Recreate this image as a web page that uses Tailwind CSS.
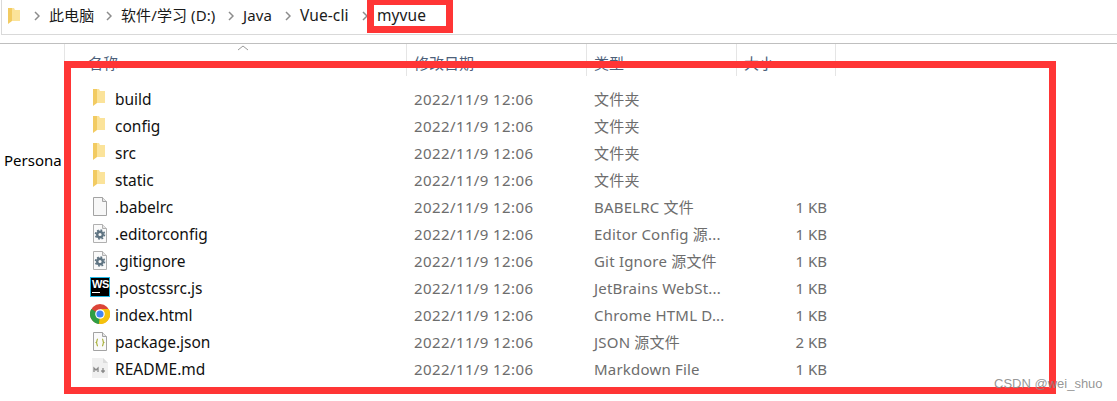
<!DOCTYPE html>
<html lang="zh">
<head>
<meta charset="utf-8">
<title>myvue</title>
<script src="https://cdn.jsdelivr.net/npm/@tailwindcss/browser@4"></script>
</head>
<body class="bg-white">
<div id="window" class="relative w-[1117px] h-[401px] overflow-hidden bg-white text-[15px] font-['Noto_Sans','Noto_Sans_CJK_SC',sans-serif]">

  <!-- Address bar -->
  <div class="h-[35px] ml-px pb-[3px] border-l border-b border-[#d9d9d9] flex items-center text-[#1a1a1a] tracking-[0.1px]">
    <svg class="ml-[6px] mr-[14px]" width="12" height="16" viewBox="0 0 12 16"><path d="M0 0h6l1 2h5v11H0z" fill="#fbe39a"/><path d="M0 0h4v13l-4 3z" fill="#f2cb62"/></svg>
    <div class="flex items-center w-[72px]"><svg class="mr-[9px]" width="6" height="10" viewBox="0 0 6 10"><path d="M1 1l4 4-4 4" fill="none" stroke="#8c8c8c" stroke-width="1.5"/></svg>此电脑</div>
    <div class="flex items-center w-[122px]"><svg class="mr-[9px]" width="6" height="10" viewBox="0 0 6 10"><path d="M1 1l4 4-4 4" fill="none" stroke="#8c8c8c" stroke-width="1.5"/></svg>软件/学习 (D:)</div>
    <div class="flex items-center w-[57px]"><svg class="mr-[9px]" width="6" height="10" viewBox="0 0 6 10"><path d="M1 1l4 4-4 4" fill="none" stroke="#8c8c8c" stroke-width="1.5"/></svg>Java</div>
    <div class="flex items-center w-[77px]"><svg class="mr-[9px]" width="6" height="10" viewBox="0 0 6 10"><path d="M1 1l4 4-4 4" fill="none" stroke="#8c8c8c" stroke-width="1.5"/></svg><span class="text-[15.5px]">Vue-cli</span></div>
    <div class="flex items-center"><svg class="mr-[9px]" width="6" height="10" viewBox="0 0 6 10"><path d="M1 1l4 4-4 4" fill="none" stroke="#8c8c8c" stroke-width="1.5"/></svg><span class="text-[15.5px]">myvue</span></div>
  </div>

  <!-- Gap above the list -->
  <div class="h-[9px] border-b border-[#bfbfbf]"></div>

  <div class="flex">
    <!-- Navigation pane -->
    <div class="w-[64px] shrink-0 overflow-hidden pt-[105px] pl-[4px] text-black whitespace-nowrap">Persona</div>

    <div class="flex-1 relative">
      <!-- Column headers -->
      <div class="flex h-[32px] text-[#4c607a] text-[15px] leading-[38px] overflow-hidden">
        <div class="w-[342px] pl-[23px] border-l border-[#e5e5e5] relative">名称
          <svg class="absolute left-[172px] top-0" width="12" height="7" viewBox="0 0 12 7"><path d="M1 6l5-4 5 4" fill="none" stroke="#9a9a9a"/></svg>
        </div>
        <div class="w-[180px] pl-[7px] border-l border-[#e5e5e5]">修改日期</div>
        <div class="w-[150px] pl-[7px] border-l border-[#e5e5e5]">类型</div>
        <div class="w-[100px] pl-[7px] border-x border-[#e5e5e5]">大小</div>
      </div>

      <!-- File rows -->
      <div class="pt-[9px] flex flex-col text-[#6d6d6d]">
        <div class="flex h-[27px] items-center pt-[2px]"><div class="w-[25px] ml-[26px] mb-[3px] shrink-0"><svg width="16" height="18" viewBox="0 0 16 18"><path d="M3 0h6l1 2h5v12H3z" fill="#fbe39a"/><path d="M3 0h4v14l-4 3z" fill="#f2cb62"/></svg></div><div class="w-[291px] text-[15.5px] text-[#111]">build</div><div class="w-[180px] pl-[8px] tracking-[0.4px]">2022/11/9 12:06</div><div class="w-[150px] pl-[8px] tracking-[0.2px]">文件夹</div><div class="w-[91px]"></div></div>
        <div class="flex h-[27px] items-center pt-[2px]"><div class="w-[25px] ml-[26px] mb-[3px] shrink-0"><svg width="16" height="18" viewBox="0 0 16 18"><path d="M3 0h6l1 2h5v12H3z" fill="#fbe39a"/><path d="M3 0h4v14l-4 3z" fill="#f2cb62"/></svg></div><div class="w-[291px] text-[15.5px] text-[#111]">config</div><div class="w-[180px] pl-[8px] tracking-[0.4px]">2022/11/9 12:06</div><div class="w-[150px] pl-[8px] tracking-[0.2px]">文件夹</div><div class="w-[91px]"></div></div>
        <div class="flex h-[27px] items-center pt-[2px]"><div class="w-[25px] ml-[26px] mb-[3px] shrink-0"><svg width="16" height="18" viewBox="0 0 16 18"><path d="M3 0h6l1 2h5v12H3z" fill="#fbe39a"/><path d="M3 0h4v14l-4 3z" fill="#f2cb62"/></svg></div><div class="w-[291px] text-[15.5px] text-[#111]">src</div><div class="w-[180px] pl-[8px] tracking-[0.4px]">2022/11/9 12:06</div><div class="w-[150px] pl-[8px] tracking-[0.2px]">文件夹</div><div class="w-[91px]"></div></div>
        <div class="flex h-[27px] items-center pt-[2px]"><div class="w-[25px] ml-[26px] mb-[3px] shrink-0"><svg width="16" height="18" viewBox="0 0 16 18"><path d="M3 0h6l1 2h5v12H3z" fill="#fbe39a"/><path d="M3 0h4v14l-4 3z" fill="#f2cb62"/></svg></div><div class="w-[291px] text-[15.5px] text-[#111]">static</div><div class="w-[180px] pl-[8px] tracking-[0.4px]">2022/11/9 12:06</div><div class="w-[150px] pl-[8px] tracking-[0.2px]">文件夹</div><div class="w-[91px]"></div></div>

        <div class="flex h-[27px] items-center pt-[2px]"><div class="w-[25px] ml-[26px] mb-[3px] shrink-0"><svg width="18" height="19" viewBox="0 0 18 19"><path d="M3.500.5h9l4 4v14h-13z" fill="#f7f7f7" stroke="#a3a3a3"/><path d="M12.500.5v4h4" fill="#e5e5e5" stroke="#a3a3a3"/></svg></div><div class="w-[291px] text-[15.5px] text-[#111]">.babelrc</div><div class="w-[180px] pl-[8px] tracking-[0.4px]">2022/11/9 12:06</div><div class="w-[150px] pl-[8px] tracking-[0.2px]">BABELRC 文件</div><div class="w-[91px] text-right">1 KB</div></div>

        <div class="flex h-[27px] items-center pt-[2px]"><div class="w-[25px] ml-[26px] mb-[3px] shrink-0"><svg width="18" height="19" viewBox="0 0 18 19"><path d="M3.500.5h9l4 4v14h-13z" fill="#fafafa" stroke="#b0b0b0"/><path d="M12.500.5v4h4" fill="#e5e5e5" stroke="#b0b0b0"/><circle cx="10" cy="10.500" r="2.800" fill="none" stroke="#5f7482" stroke-width="2.400"/><circle cx="10" cy="10.500" r="4.500" fill="none" stroke="#5f7482" stroke-width="1.600" stroke-dasharray="1.800 1.730"/></svg></div><div class="w-[291px] text-[15.5px] text-[#111]">.editorconfig</div><div class="w-[180px] pl-[8px] tracking-[0.4px]">2022/11/9 12:06</div><div class="w-[150px] pl-[8px] tracking-[0.2px]">Editor Config 源...</div><div class="w-[91px] text-right">1 KB</div></div>
        <div class="flex h-[27px] items-center pt-[2px]"><div class="w-[25px] ml-[26px] mb-[3px] shrink-0"><svg width="18" height="19" viewBox="0 0 18 19"><path d="M3.500.5h9l4 4v14h-13z" fill="#fafafa" stroke="#b0b0b0"/><path d="M12.500.5v4h4" fill="#e5e5e5" stroke="#b0b0b0"/><circle cx="10" cy="10.500" r="2.800" fill="none" stroke="#5f7482" stroke-width="2.400"/><circle cx="10" cy="10.500" r="4.500" fill="none" stroke="#5f7482" stroke-width="1.600" stroke-dasharray="1.800 1.730"/></svg></div><div class="w-[291px] text-[15.5px] text-[#111]">.gitignore</div><div class="w-[180px] pl-[8px] tracking-[0.4px]">2022/11/9 12:06</div><div class="w-[150px] pl-[8px] tracking-[0.2px]">Git Ignore 源文件</div><div class="w-[91px] text-right">1 KB</div></div>

        <div class="flex h-[27px] items-center pt-[2px]"><div class="w-[25px] ml-[26px] mb-[3px] shrink-0"><div class="w-[20px] h-[20px] bg-black border border-[#21b8e6] text-white text-[11px] leading-[11px] font-bold font-['Liberation_Sans',sans-serif] pl-[1px] pt-[1px] tracking-[-0.5px]">WS<div class="w-[8px] h-[1px] bg-white mt-[2px]"></div></div></div><div class="w-[291px] text-[15.5px] text-[#111]">.postcssrc.js</div><div class="w-[180px] pl-[8px] tracking-[0.4px]">2022/11/9 12:06</div><div class="w-[150px] pl-[8px] tracking-[0.2px]">JetBrains WebSt...</div><div class="w-[91px] text-right">1 KB</div></div>

        <div class="flex h-[27px] items-center pt-[2px]"><div class="w-[25px] ml-[26px] mb-[3px] shrink-0"><svg width="20" height="20" viewBox="0 0 20 20"><circle cx="10" cy="10" r="10" fill="#dc4437"/><path d="M10 10L1.300 5A10 10 0 0 0 10 20z" fill="#2f9e44"/><path d="M10 10l-1 10A10 10 0 0 0 18.700 5H10z" fill="#f4c20d"/><circle cx="10" cy="10" r="4.800" fill="#fff"/><circle cx="10" cy="10" r="3.600" fill="#4285f4"/></svg></div><div class="w-[291px] text-[15.5px] text-[#111]">index.html</div><div class="w-[180px] pl-[8px] tracking-[0.4px]">2022/11/9 12:06</div><div class="w-[150px] pl-[8px] tracking-[0.2px]">Chrome HTML D...</div><div class="w-[91px] text-right">1 KB</div></div>

        <div class="flex h-[27px] items-center pt-[2px]"><div class="w-[25px] ml-[26px] mb-[3px] shrink-0"><svg width="18" height="19" viewBox="0 0 18 19"><path d="M3.500.5h9l4 4v14h-13z" fill="#fafafa" stroke="#a3a3a3"/><path d="M12.500.5v4h4" fill="#e5e5e5" stroke="#a3a3a3"/><path d="M8 7c-1.500 0-.7 3-1.700 3.500C7.300 11-.7 14 8 14" fill="none"/><path d="M8 7c-1.500 0-.7 3-1.700 3.500 1 .5.200 3.500 1.700 3.500M12 7c1.500 0 .7 3 1.700 3.500-1 .5-.2 3.500-1.700 3.500" fill="none" stroke="#a8b03a" stroke-width="1.200"/></svg></div><div class="w-[291px] text-[15.5px] text-[#111]">package.json</div><div class="w-[180px] pl-[8px] tracking-[0.4px]">2022/11/9 12:06</div><div class="w-[150px] pl-[8px] tracking-[0.2px]">JSON 源文件</div><div class="w-[91px] text-right">2 KB</div></div>

        <div class="flex h-[27px] items-center pt-[2px]"><div class="w-[25px] ml-[26px] mb-[3px] shrink-0"><svg width="19" height="20" viewBox="0 0 19 20"><path d="M2 0h11l5 5v15H2z" fill="#f0f0f0"/><path d="M13 0v5h5" fill="#dcdcdc"/><path d="M4 14v-4l2 2 2-2v4M13 10v4M11.300 12.500L13 14.300l1.700-1.800" fill="none" stroke="#8a8a8a" stroke-width="1.300"/></svg></div><div class="w-[291px] text-[15.5px] text-[#111]">README.md</div><div class="w-[180px] pl-[8px] tracking-[0.4px]">2022/11/9 12:06</div><div class="w-[150px] pl-[8px] tracking-[0.2px]">Markdown File</div><div class="w-[91px] text-right">1 KB</div></div>
      </div>
    </div>
  </div>

  <!-- Red annotation boxes drawn over the screenshot -->
  <div class="absolute left-[367px] top-0 w-[86px] h-[33px] border-x-[7px] border-t-[5px] border-b-[7px] border-[#ff3535]"></div>
  <div class="absolute left-[64px] top-[61px] w-[992px] h-[333px] border-[7px] border-[#ff3535]"></div>

  <!-- Watermark -->
  <div class="absolute left-[994px] top-[376px] text-[13px] leading-[16px] text-[#8a8a8a]/90 font-['Liberation_Sans',sans-serif]">CSDN @wei_shuo</div>
</div>
</body>
</html>
